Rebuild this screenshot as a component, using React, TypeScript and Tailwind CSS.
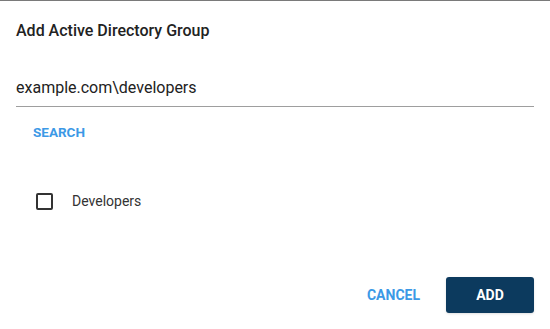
export default function App() {
  return (
    <div
      className="w-[550px] h-[329px] bg-white border-t border-[#7a7a7a] flex flex-col"
      style={{ fontFamily: "Roboto, 'Liberation Sans', sans-serif" }}
    >
      {/* Title */}
      <h2 className="pt-[18px] px-4 text-[16px] leading-6 font-medium text-[#222]">
        Add Active Directory Group
      </h2>

      {/* Input */}
      <div className="mt-[33px] px-4">
        <div className="border-b border-[#9e9e9e] pb-[6px]">
          <input
            className="w-full text-[16px] leading-6 text-[#222] outline-none bg-transparent"
            defaultValue="example.com\developers"
          />
        </div>
      </div>

      {/* Search */}
      <div className="mt-[7px] px-4">
        <button className="h-9 px-[17px] text-[13.5px] font-bold text-[#3c99e6]">
          SEARCH
        </button>
      </div>

      {/* Results */}
      <div className="mt-[30px] px-4">
        <label className="flex items-center h-[42px] pl-5">
          <span className="w-[17px] h-[17px] border-2 border-[#333] rounded-[2px] shrink-0" />
          <span className="ml-[19px] text-[14px] text-[#333]">Developers</span>
        </label>
      </div>

      {/* Actions */}
      <div className="mt-auto flex justify-end items-center gap-[26px] px-4 pb-4">
        <button className="h-9 text-[14px] font-bold text-[#3c99e6]">CANCEL</button>
        <button className="h-9 w-[88px] rounded-[3px] bg-[#0c3a5e] text-white text-[14px] font-bold shadow-sm">
          ADD
        </button>
      </div>
    </div>
  );
}
